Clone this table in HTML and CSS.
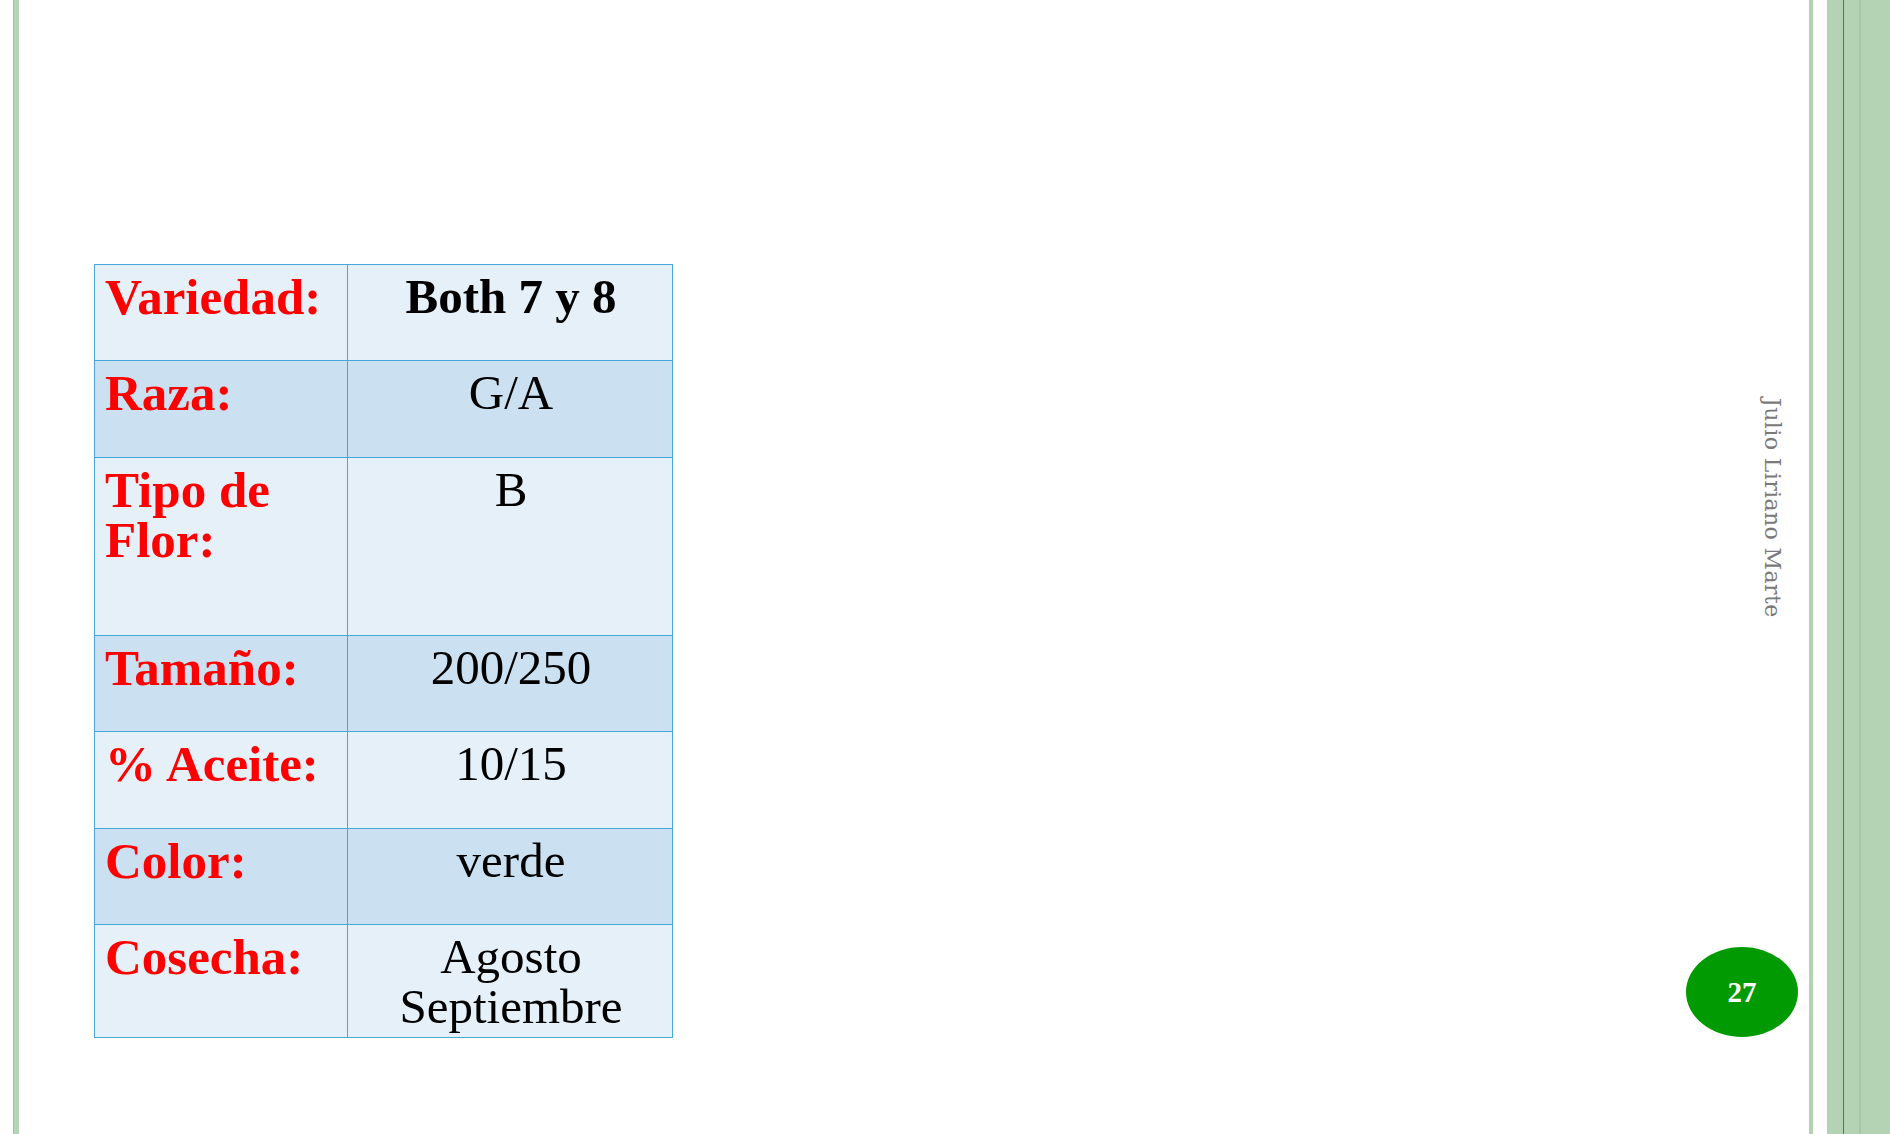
FILE: index.html
```html
<!DOCTYPE html>
<html lang="es">
<head>
<meta charset="utf-8">
<title>Julio Liriano Marte - 27</title>
<link rel="stylesheet" href="styles.css">
</head>
<body>
<div class="slide">
  <div class="rule-left"></div>
  <main class="main">
    <table class="specs">
      <colgroup><col class="c-label"><col class="c-value"></colgroup>
      <tbody>
        <tr class="r-light r-std"><td class="label">Variedad:</td><td class="value strong">Both 7 y 8</td></tr>
        <tr class="r-dark r-std"><td class="label">Raza:</td><td class="value">G/A</td></tr>
        <tr class="r-light r-tall"><td class="label">Tipo de Flor:</td><td class="value">B</td></tr>
        <tr class="r-dark r-std"><td class="label">Tamaño:</td><td class="value">200/250</td></tr>
        <tr class="r-light r-std"><td class="label">% Aceite:</td><td class="value">10/15</td></tr>
        <tr class="r-dark r-std"><td class="label">Color:</td><td class="value">verde</td></tr>
        <tr class="r-light r-last"><td class="label">Cosecha:</td><td class="value">Agosto Septiembre</td></tr>
      </tbody>
    </table>
  </main>
  <aside class="aside">
    <div class="author">Julio Liriano Marte</div>
    <div class="page-num">27</div>
  </aside>
  <div class="rule-right">
    <div class="rr-thin"></div>
    <div class="rr-gap"></div>
    <div class="rr-band">
      <div class="rr-a"></div>
      <div class="rr-line"></div>
      <div class="rr-b"></div>
      <div class="rr-shade"></div>
      <div class="rr-c"></div>
    </div>
  </div>
</div>
</body>
</html>
```

FILE: styles.css
```css
html, body {
  margin: 0;
  padding: 0;
  background: #ffffff;
}

.slide {
  display: flex;
  width: 1890px;
  height: 1134px;
  overflow: hidden;
  background: #ffffff;
}

.rule-left {
  margin-left: 13px;
  width: 5px;
  background: #b6d4b6;
  border-left: 1px solid #9fc39f;
  flex: none;
}

.main {
  flex: 1;
  padding: 264px 0 0 75px;
}

.specs {
  border-collapse: collapse;
  table-layout: fixed;
  width: 578px;
  font-family: "Liberation Serif", "Times New Roman", serif;
  font-size: 49px;
  line-height: 50px;
}

.c-label { width: 253px; }
.c-value { width: 325px; }

.specs td {
  border: 1px solid #47a8d8;
  vertical-align: top;
  padding: 7px 8px 0 10px;
}

.r-light td { background: #e6f0f9; }
.r-dark td { background: #cbe1f2; }

.r-std td { height: 88.4px; }
.r-tall td { height: 170px; }
.r-last td { height: 105px; }

.label {
  color: #ff0000;
  font-weight: bold;
  font-size: 51px;
  text-align: left;
}

.value {
  color: #000000;
  text-align: center;
}

.value.strong { font-weight: bold; }

.aside {
  flex: none;
  width: 112px;
  margin-right: 11px;
  display: flex;
  flex-direction: column;
  padding-top: 398px;
}

.author {
  align-self: flex-end;
  margin-right: 14px;
  writing-mode: vertical-rl;
  font-family: "DejaVu Serif", serif;
  font-size: 22px;
  letter-spacing: 0.4px;
  line-height: 24px;
  color: #7a7a7a;
  white-space: nowrap;
}

.page-num {
  margin-top: auto;
  margin-bottom: 97px;
  width: 112px;
  height: 90px;
  border-radius: 50%;
  background: #029a02;
  color: #ffffff;
  font-family: "Liberation Serif", "Times New Roman", serif;
  font-weight: bold;
  font-size: 29px;
  display: flex;
  align-items: center;
  justify-content: center;
}

.rule-right {
  flex: none;
  display: flex;
  width: 81px;
}

.rr-thin { width: 4px; background: #b3d2b4; }
.rr-gap { width: 14px; background: #ffffff; }
.rr-band { flex: 1; display: flex; background: #b4d3b5; }
.rr-a { width: 16px; }
.rr-line { width: 1px; background: #1f9a1f; }
.rr-b { width: 15px; }
.rr-shade { width: 2px; background: #a6c8a7; }
.rr-c { flex: 1; }
```
